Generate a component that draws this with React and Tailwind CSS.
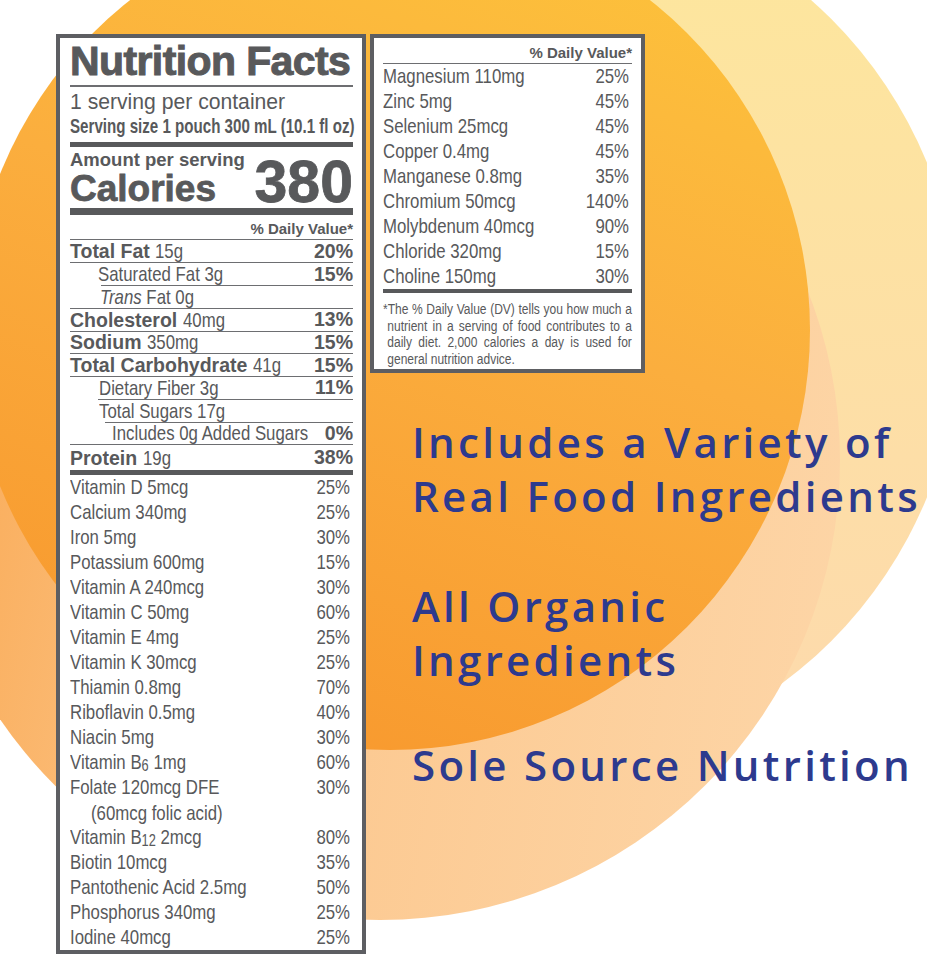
import React from 'react'

const labelFont = "font-['Liberation_Sans',Arial,Helvetica,sans-serif]"

const macroRows = [
  { bold: 'Total Fat', text: '15g', pct: '20%' },
  { text: 'Saturated Fat 3g', pct: '15%', pad: 'pl-[28px]', line: 'ml-[31px]' },
  { italic: 'Trans', text: ' Fat 0g', pad: 'pl-[30px]' },
  { bold: 'Cholesterol', text: '40mg', pct: '13%' },
  { bold: 'Sodium', text: '350mg', pct: '15%' },
  { bold: 'Total Carbohydrate', text: '41g', pct: '15%' },
  { text: 'Dietary Fiber 3g', pct: '11%', pad: 'pl-[29px]', line: 'ml-[28px]' },
  { text: 'Total Sugars 17g', pad: 'pl-[29px]', line: 'ml-[35px]' },
  { text: 'Includes 0g Added Sugars', pct: '0%', pad: 'pl-[42px]' },
  { bold: 'Protein', text: '19g', pct: '38%', tall: true, last: true },
]

const vitamins = [
  ['Vitamin D 5mcg', '25%'],
  ['Calcium 340mg', '25%'],
  ['Iron 5mg', '30%'],
  ['Potassium 600mg', '15%'],
  ['Vitamin A 240mcg', '30%'],
  ['Vitamin C 50mg', '60%'],
  ['Vitamin E 4mg', '25%'],
  ['Vitamin K 30mcg', '25%'],
  ['Thiamin 0.8mg', '70%'],
  ['Riboflavin 0.5mg', '40%'],
  ['Niacin 5mg', '30%'],
  ['B6', '60%'],
  ['Folate', '30%'],
  ['B12', '80%'],
  ['Biotin 10mcg', '35%'],
  ['Pantothenic Acid 2.5mg', '50%'],
  ['Phosphorus 340mg', '25%'],
  ['Iodine 40mcg', '25%'],
]

const minerals = [
  ['Magnesium 110mg', '25%'],
  ['Zinc 5mg', '45%'],
  ['Selenium 25mcg', '45%'],
  ['Copper 0.4mg', '45%'],
  ['Manganese 0.8mg', '35%'],
  ['Chromium 50mcg', '140%'],
  ['Molybdenum 40mcg', '90%'],
  ['Chloride 320mg', '15%'],
  ['Choline 150mg', '30%'],
]

// the label face is a condensed grotesque, so squeeze Liberation Sans sideways
const Narrow = ({ children, className = '' }) => (
  <span className={`inline-block origin-left scale-x-[0.8] whitespace-nowrap text-[21px] ${className}`}>{children}</span>
)

const NarrowPct = ({ children }) => (
  <span className="inline-block origin-right scale-x-[0.8] whitespace-nowrap text-[21px]">{children}</span>
)

const MacroRow = ({ row }) => (
  <div className={`flex flex-col ${row.tall ? 'h-[25px]' : 'h-[22.75px]'}`}>
    <div className={`flex flex-1 items-center justify-between text-[19.5px] leading-[21px] ${row.pad || ''}`}>
      <div className="min-w-0 flex-1 whitespace-nowrap">
        {row.bold && <span className="font-bold">{row.bold} </span>}
        <Narrow>
          {row.italic && <i>{row.italic}</i>}
          {row.text}
        </Narrow>
      </div>
      {row.pct && <span className="font-bold">{row.pct}</span>}
    </div>
    {!row.last && <div className={`h-px bg-[#6d6e71] ${row.line || ''}`} />}
  </div>
)

const vitaminName = (name) => {
  if (name === 'B6')
    return (
      <>
        Vitamin B<span className="align-[-2px] text-[16px] leading-none">6</span> 1mg
      </>
    )
  if (name === 'B12')
    return (
      <>
        Vitamin B<span className="align-[-2px] text-[16px] leading-none">12</span> 2mcg
      </>
    )
  return name
}

const VitaminRow = ({ name, pct, last }) => {
  const folate = name === 'Folate'
  return (
    <div className={`flex flex-col ${folate ? 'h-[50px]' : 'h-[25px]'}`}>
      <div className="flex flex-1 justify-between pr-[3px] leading-[24px]">
        <div className="min-w-0 flex-1">
          {folate ? (
            <>
              <div><Narrow>Folate 120mcg DFE</Narrow></div>
              <div className="pl-[21px]"><Narrow>(60mcg folic acid)</Narrow></div>
            </>
          ) : (
            <Narrow>{vitaminName(name)}</Narrow>
          )}
        </div>
        <NarrowPct>{pct}</NarrowPct>
      </div>
      {!last && <div className="h-px bg-[#6d6e71]" />}
    </div>
  )
}

const NutritionLabel = () => (
  <div className={`flex h-[920px] w-[310px] shrink-0 flex-col border-4 border-[#5d5e62] bg-white pl-[10px] pr-[9px] text-[#58595b] ${labelFont}`}>
    <div className="pt-[1px] text-[41px] font-bold leading-[44px] tracking-[-0.6px] whitespace-nowrap [-webkit-text-stroke:1px_#58595b]">
      Nutrition Facts
    </div>
    <div className="mt-[2px] h-[1.5px] bg-[#6d6e71]" />
    <div className="mt-[4px] h-[22px] whitespace-nowrap text-[22.5px] leading-[22px]">
      <span className="inline-block origin-left scale-x-[0.94]">1 serving per container</span>
    </div>
    <div className="mt-[2px] h-[22px] whitespace-nowrap text-[21px] font-bold leading-[22px]">
      <span className="inline-block origin-left scale-x-[0.72]">Serving size 1 pouch 300 mL (10.1 fl oz)</span>
    </div>
    <div className="mt-[5px] h-[6px] bg-[#58595b]" />
    <div className="flex h-[61px] items-end justify-between">
      <div className="pt-[3px]">
        <div className="text-[18.5px] font-bold leading-[20px] whitespace-nowrap">Amount per serving</div>
        <div className="text-[37px] font-bold leading-[38px] [-webkit-text-stroke:0.8px_#58595b]">Calories</div>
      </div>
      <div className="text-[59px] font-bold leading-[52px] [-webkit-text-stroke:0.8px_#58595b]">380</div>
    </div>
    <div className="h-[7px] bg-[#58595b]" />
    <div className="flex h-[24px] items-end justify-end pb-[1px] text-[15px] font-bold leading-[18px] whitespace-nowrap">
      % Daily Value*
    </div>
    <div className="h-px bg-[#6d6e71]" />
    {macroRows.map((row) => (
      <MacroRow key={row.bold || row.text} row={row} />
    ))}
    <div className="h-[5px] bg-[#58595b]" />
    {vitamins.map(([name, pct], i) => (
      <VitaminRow key={name} name={name} pct={pct} last={i === vitamins.length - 1} />
    ))}
  </div>
)

const footnote = [
  '*The % Daily Value (DV) tells you how much a',
  'nutrient in a serving of food contributes to a',
  'daily diet. 2,000 calories a day is used for',
  'general nutrition advice.',
]

const MineralLabel = () => (
  <div className={`flex h-[339px] w-[275px] shrink-0 flex-col border-4 border-[#5d5e62] bg-white px-[9px] text-[#58595b] ${labelFont}`}>
    <div className="flex h-[25px] items-end justify-end pb-[1px] text-[15px] font-bold leading-[18px]">% Daily Value*</div>
    <div className="h-px bg-[#6d6e71]" />
    {minerals.map(([name, pct], i) => (
      <div key={name} className="flex h-[25px] flex-col">
        <div className="flex flex-1 justify-between pr-[3px] leading-[24px]">
          <div className="min-w-0 flex-1">
            <Narrow>{name}</Narrow>
          </div>
          <NarrowPct>{pct}</NarrowPct>
        </div>
        {i < minerals.length - 1 && <div className="h-px bg-[#6d6e71]" />}
      </div>
    ))}
    <div className="h-[4px] bg-[#58595b]" />
    <div className="w-[249px] pt-[8px]">
      <div className="w-[290px] origin-top-left scale-x-[0.858] text-[14px] leading-[16.7px]">
        {footnote.map((line, i) => (
          <div
            key={i}
            className={
              i === 0
                ? 'whitespace-nowrap text-justify [text-align-last:justify]'
                : i < 3
                  ? 'whitespace-nowrap pl-[5px] text-justify [text-align-last:justify]'
                  : 'whitespace-nowrap pl-[5px]'
            }
          >
            {line}
          </div>
        ))}
      </div>
    </div>
  </div>
)

export default function App() {
  return (
    <div className="relative h-[959px] w-[927px] overflow-hidden bg-white">
      {/* background blobs */}
      <div className="pointer-events-none absolute left-[80px] top-[-110px] h-[880px] w-[880px] rounded-full bg-[linear-gradient(180deg,#fde79c,#fdd9ad)]" />
      <div className="pointer-events-none absolute left-[-80px] top-0 h-[920px] w-[920px] rounded-full bg-[linear-gradient(100deg,#f9a449,#fcc88f_45%,#fdd6a8)]" />
      <div className="pointer-events-none absolute left-[-30px] top-[-90px] h-[840px] w-[840px] rounded-full bg-[linear-gradient(200deg,#fdc63a,#fbae3e_45%,#f7952b)]" />

      <div className="relative flex items-start gap-[4px] pl-[56px] pt-[34px]">
        <NutritionLabel />
        <div className="flex flex-col">
          <MineralLabel />
          <div className="mt-[42px] pl-[42px] font-['Open_Sans',sans-serif] text-[42px] font-semibold leading-[54px] tracking-[3.3px] text-[#2d3a8e] whitespace-nowrap">
            <div>Includes a Variety of</div>
            <div>Real Food Ingredients</div>
            <div className="mt-[56px]">All Organic</div>
            <div>Ingredients</div>
            <div className="mt-[51px]">Sole Source Nutrition</div>
          </div>
        </div>
      </div>
    </div>
  )
}
